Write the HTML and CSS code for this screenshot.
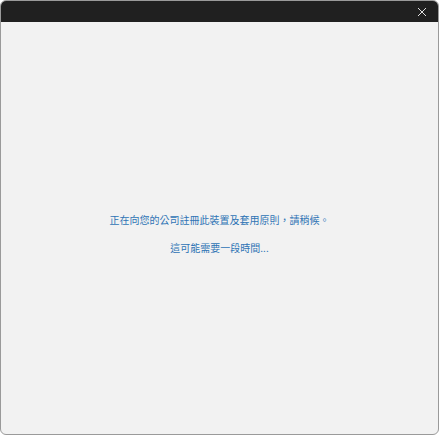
FILE: index.html
```html
<!DOCTYPE html>
<html>
<head>
<meta charset="utf-8">
<link rel="stylesheet" href="styles.css">
</head>
<body>
<div class="window">
  <div class="titlebar">
    <button class="close" aria-label="關閉">
      <svg width="10" height="10" viewBox="0 0 10 10"><path d="M1 1L9 9M9 1L1 9" stroke="#e0e0e0" stroke-width="1"/></svg>
    </button>
  </div>
  <div class="content">
    <p class="msg">正在向您的公司註冊此裝置及套用原則，請稍候。</p>
    <p class="msg">這可能需要一段時間...</p>
  </div>
</div>
</body>
</html>
```
FILE: styles.css
```css
html, body {
  margin: 0;
  padding: 0;
  width: 439px;
  height: 435px;
  background: #ffffff;
  overflow: hidden;
}
.window {
  box-sizing: border-box;
  width: 439px;
  height: 435px;
  border: 1px solid #9a9a9a;
  border-radius: 6px;
  overflow: hidden;
  display: flex;
  flex-direction: column;
  background: #f2f2f2;
}
.titlebar {
  height: 21px;
  background: #202020;
  display: flex;
  justify-content: flex-end;
  align-items: center;
  flex: none;
}
.close {
  background: none;
  border: 0;
  padding: 0;
  width: 30px;
  height: 21px;
  margin-right: 1px;
  display: flex;
  align-items: center;
  justify-content: center;
}
.content {
  flex: 1;
  display: flex;
  flex-direction: column;
  align-items: center;
  justify-content: center;
  gap: 17px;
  padding-top: 10px;
  font-family: "Noto Sans CJK TC", "Microsoft JhengHei", sans-serif;
  font-size: 10px;
  color: #2f74b5;
}
.msg {
  margin: 0;
  line-height: 11px;
}
```
